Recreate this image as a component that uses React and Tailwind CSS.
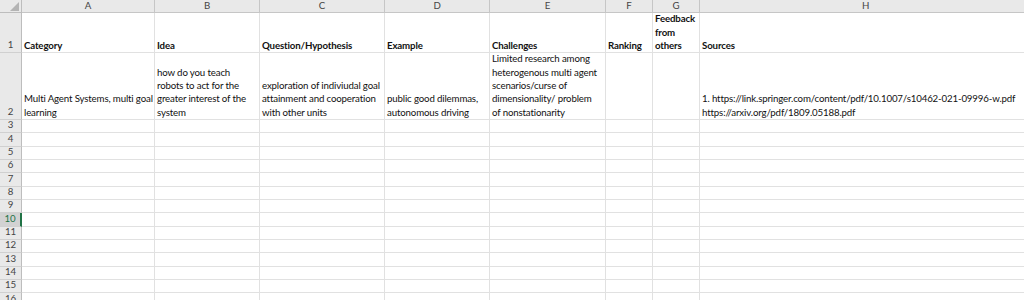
const COLS = [
  { key: 'A', w: 133 },
  { key: 'B', w: 105 },
  { key: 'C', w: 125 },
  { key: 'D', w: 105 },
  { key: 'E', w: 116 },
  { key: 'F', w: 47 },
  { key: 'G', w: 47 },
  { key: 'H', w: 332 },
];

// line breaks follow the wrapping in the sheet
const HEADERS = ['Category', 'Idea', 'Question/Hypothesis', 'Example', 'Challenges', 'Ranking', 'Feedback\nfrom\nothers', 'Sources'];

const ROW2 = [
  'Multi Agent Systems, multi goal\nlearning',
  'how do you teach\nrobots to act for the\ngreater interest of the\nsystem',
  'exploration of indiviudal goal\nattainment and cooperation\nwith other units',
  'public good dilemmas,\nautonomous driving',
  'Limited research among\nheterogenous multi agent\nscenarios/curse of\ndimensionality/ problem\nof nonstationarity',
  '',
  '',
  '1. https://link.springer.com/content/pdf/10.1007/s10462-021-09996-w.pdf\nhttps://arxiv.org/pdf/1809.05188.pdf',
];

const EMPTY_ROWS = [3, 4, 5, 6, 7, 8, 9, 10, 11, 12, 13, 14, 15, 16];

function RowHead({ n, h, active }) {
  return (
    <div
      className={`w-[22px] shrink-0 flex items-end justify-center border-b border-[#d0d0d0] ${
        active ? 'bg-[#d2d2d2] text-[#217346] border-r-2 border-r-[#217346]' : 'bg-[#e9e9e9] text-[#444] border-r border-r-[#bdbdbd]'
      }`}
      style={{ height: h }}
    >
      <span className="leading-[13px] pb-px">{n}</span>
    </div>
  );
}

export default function App() {
  return (
    <div className="w-[1024px] h-[300px] overflow-hidden bg-white text-[9.7px] tracking-[-0.15px] text-[#111]" style={{ fontFamily: 'Lato, "Open Sans", sans-serif' }}>
      {/* column letters */}
      <div className="flex h-[13.33px]">
        <div className="w-[22px] shrink-0 bg-[#e9e9e9] border-r border-b border-[#bdbdbd] flex items-end justify-end pr-[2px] pb-[1px]">
          <svg width="9" height="9" viewBox="0 0 9 9"><polygon points="9,0 9,9 0,9" fill="#b4b4b4" /></svg>
        </div>
        {COLS.map(c => (
          <div key={c.key} className="shrink-0 bg-[#e9e9e9] border-r border-b border-[#c6c6c6] flex items-center justify-center text-[#444] leading-none" style={{ width: c.w }}>
            {c.key}
          </div>
        ))}
      </div>

      {/* row 1 */}
      <div className="flex">
        <RowHead n={1} h={40} />
        {COLS.map((c, i) => (
          <div key={c.key} className="shrink-0 h-[40px] border-r border-b border-[#e1e1e1] flex items-end pl-[2px] font-bold leading-[13.33px] whitespace-pre" style={{ width: c.w }}>
            {HEADERS[i]}
          </div>
        ))}
      </div>

      {/* row 2 */}
      <div className="flex">
        <RowHead n={2} h={66.67} />
        {COLS.map((c, i) => (
          <div key={c.key} className="shrink-0 h-[66.67px] border-r border-b border-[#e1e1e1] flex items-end pl-[2px] leading-[13.33px] whitespace-pre" style={{ width: c.w }}>
            {ROW2[i]}
          </div>
        ))}
      </div>

      {EMPTY_ROWS.map(n => (
        <div key={n} className="flex">
          <RowHead n={n} h={13.33} active={n === 10} />
          {COLS.map(c => (
            <div key={c.key} className="shrink-0 h-[13.33px] border-r border-b border-[#e1e1e1]" style={{ width: c.w }} />
          ))}
        </div>
      ))}
    </div>
  );
}
